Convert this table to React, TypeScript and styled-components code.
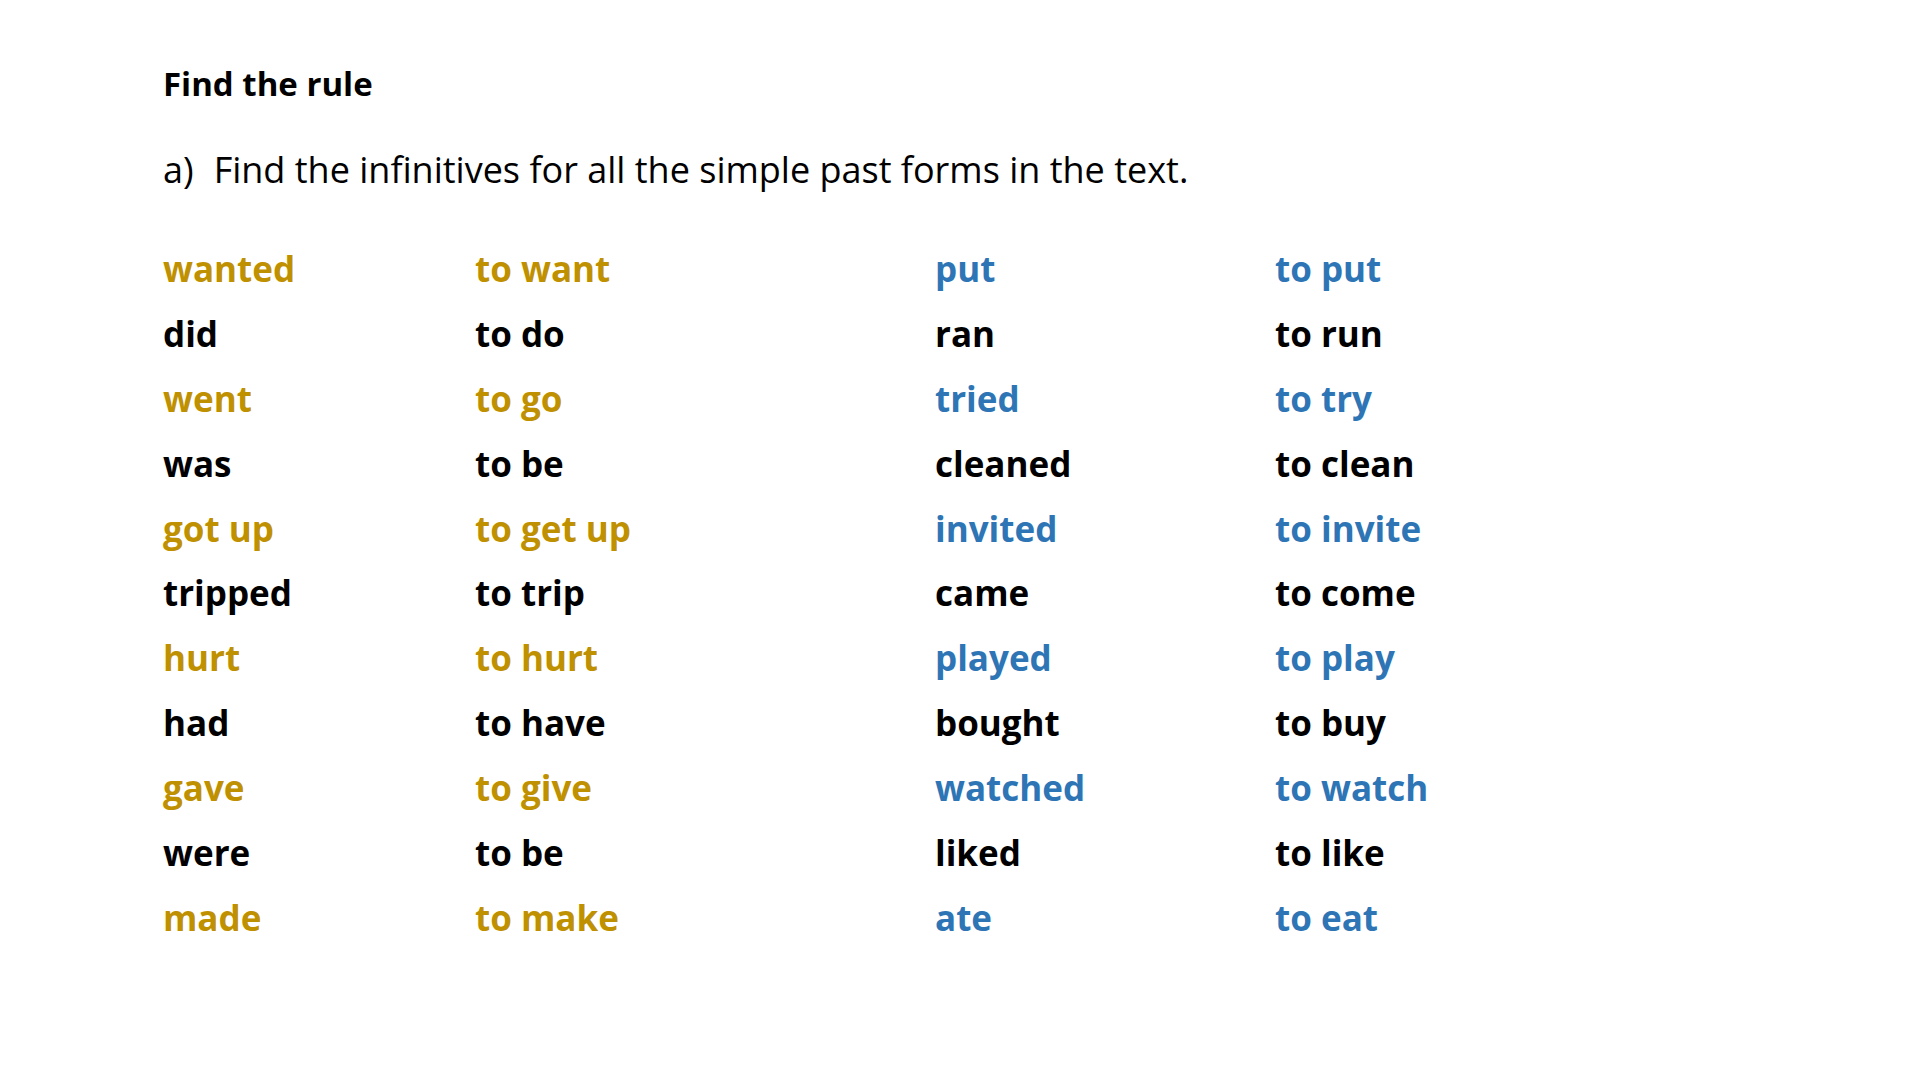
import React from "react";
import styled, { createGlobalStyle } from "styled-components";

const Global = createGlobalStyle`
  html, body {
    margin: 0;
    padding: 0;
    background: #ffffff;
  }
  body {
    font-family: "Open Sans", "DejaVu Sans", sans-serif;
    color: #000000;
  }
`;

const Page = styled.main`
  width: 1920px;
  height: 1080px;
  box-sizing: border-box;
  padding: 67px 0 0 163px;
  background: #ffffff;
  display: flex;
  flex-direction: column;
`;

const Heading = styled.h1`
  margin: 0;
  font-size: 33px;
  line-height: 33px;
  font-weight: 700;
  color: #000;
`;

const Instruction = styled.p`
  margin: 52px 0 0 0;
  font-size: 36px;
  line-height: 36px;
  font-weight: 400;
  color: #000;
  display: flex;
  gap: 20px;
`;

const Table = styled.div`
  margin-top: 49px;
  display: grid;
  grid-template-columns: 312px 460px 340px auto;
  grid-auto-rows: 64.9px;
`;

type Tone = "gold" | "black" | "blue";

const toneColor: Record<Tone, string> = {
  gold: "#BF9000",
  black: "#000000",
  blue: "#2E75B6",
};

const Cell = styled.span<{ $tone: Tone }>`
  font-size: 35px;
  line-height: 64.9px;
  font-weight: 700;
  color: ${(p) => toneColor[p.$tone]};
  white-space: nowrap;
`;

const left: [string, string][] = [
  ["wanted", "to want"],
  ["did", "to do"],
  ["went", "to go"],
  ["was", "to be"],
  ["got up", "to get up"],
  ["tripped", "to trip"],
  ["hurt", "to hurt"],
  ["had", "to have"],
  ["gave", "to give"],
  ["were", "to be"],
  ["made", "to make"],
];

const right: [string, string][] = [
  ["put", "to put"],
  ["ran", "to run"],
  ["tried", "to try"],
  ["cleaned", "to clean"],
  ["invited", "to invite"],
  ["came", "to come"],
  ["played", "to play"],
  ["bought", "to buy"],
  ["watched", "to watch"],
  ["liked", "to like"],
  ["ate", "to eat"],
];

export default function App() {
  return (
    <>
      <Global />
      <Page>
        <Heading>Find the rule</Heading>
        <Instruction>
          <span>a)</span>
          <span>Find the infinitives for all the simple past forms in the text.</span>
        </Instruction>
        <Table>
          {left.map((l, i) => {
            const r = right[i];
            const even = i % 2 === 0;
            const lt: Tone = even ? "gold" : "black";
            const rt: Tone = even ? "blue" : "black";
            return (
              <React.Fragment key={i}>
                <Cell $tone={lt}>{l[0]}</Cell>
                <Cell $tone={lt}>{l[1]}</Cell>
                <Cell $tone={rt}>{r[0]}</Cell>
                <Cell $tone={rt}>{r[1]}</Cell>
              </React.Fragment>
            );
          })}
        </Table>
      </Page>
    </>
  );
}
